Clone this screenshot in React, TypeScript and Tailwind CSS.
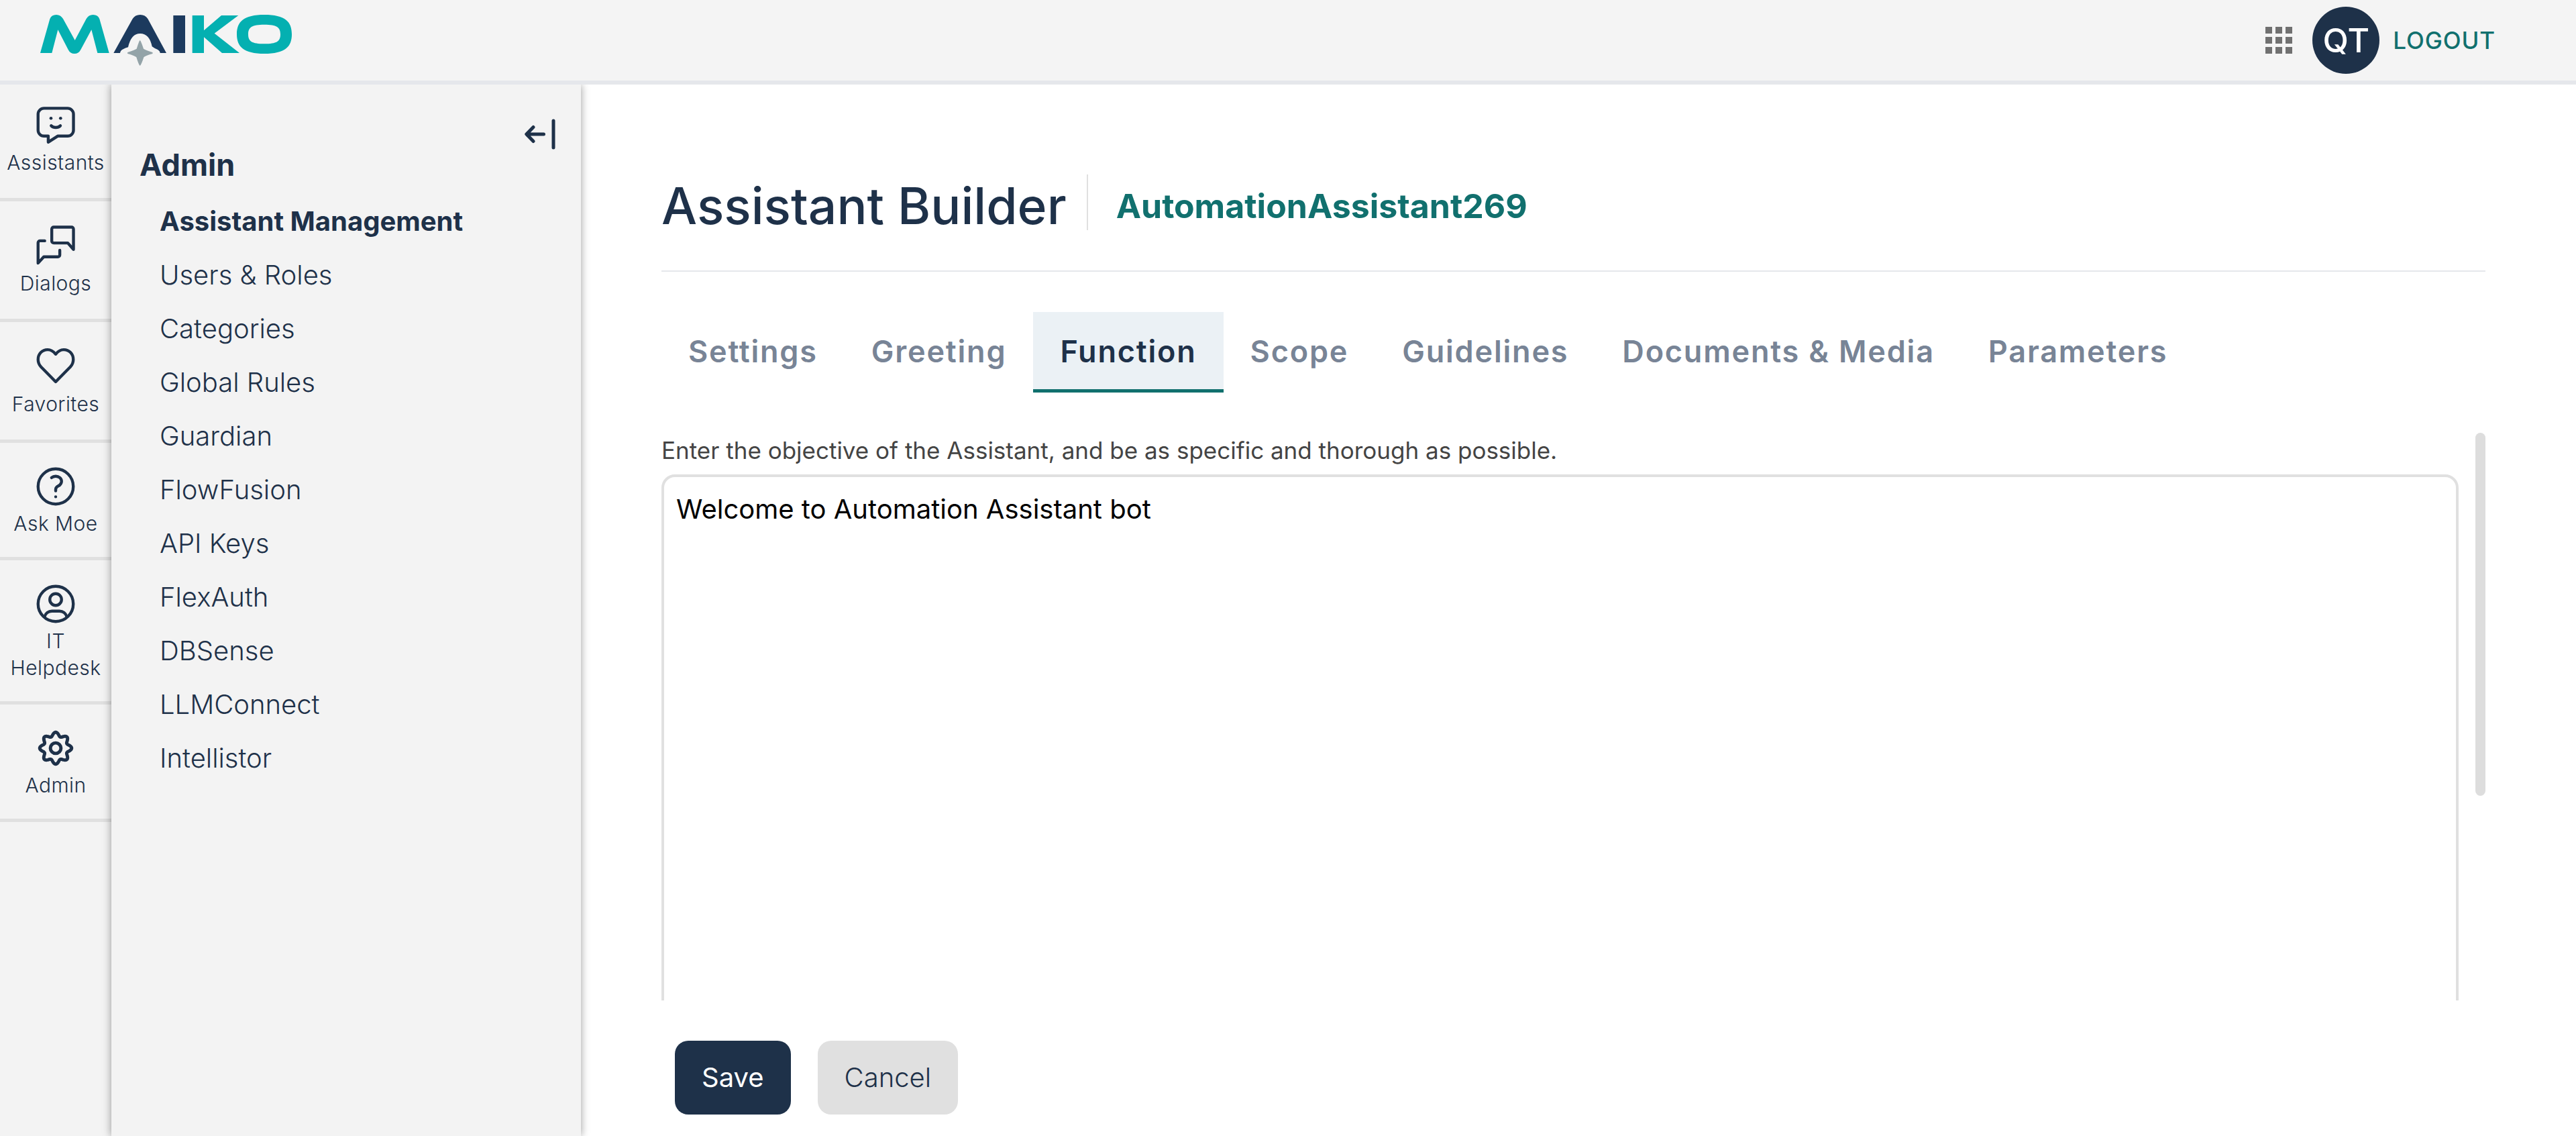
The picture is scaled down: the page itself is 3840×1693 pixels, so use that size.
import type { ReactNode } from "react";

const GEAR_PATH = (() => {
  const steps = 160;
  const points = Array.from({ length: steps }, (_, i) => {
    const angle = (i / steps) * Math.PI * 2;
    const radius = 7.15 + 1.0 * Math.cos(angle * 8);
    return `${(12 + radius * Math.sin(angle)).toFixed(2)} ${(12 - radius * Math.cos(angle)).toFixed(2)}`;
  });
  return `M${points.join("L")}Z`;
})();

function RailIcon({ children }: { children: ReactNode }) {
  return (
    <svg
      viewBox="0 0 24 24"
      className="size-[70px]"
      fill="none"
      stroke="currentColor"
      strokeWidth="1.5"
      strokeLinecap="round"
      strokeLinejoin="round"
      aria-hidden="true"
    >
      {children}
    </svg>
  );
}

const railItems = [
  {
    label: "Assistants",
    box: "pt-[24px] leading-[45px]",
    icon: (
      <>
        <path d="M6 3.9h12.1a3 3 0 0 1 3 3v8.2a3 3 0 0 1-3 3H13L8.2 21.2v-3.1H6a3 3 0 0 1-3-3V6.9a3 3 0 0 1 3-3Z" />
        <path d="M9.7 12.8c1.2 1.2 3.5 1.2 4.7 0" />
        <circle cx="9.6" cy="9" r=".8" fill="currentColor" stroke="none" />
        <circle cx="14.5" cy="9" r=".8" fill="currentColor" stroke="none" />
      </>
    ),
  },
  {
    label: "Dialogs",
    box: "pt-[30px] leading-[45px]",
    icon: (
      <>
        <path d="M11 2.9h9.1a1 1 0 0 1 1 1v10.4L18.2 11H11a1 1 0 0 1-1-1V3.9a1 1 0 0 1 1-1Z" />
        <path d="M6.4 9.9H4a1 1 0 0 0-1 1v10.4l2.9-3.2h7.2a1 1 0 0 0 1-1v-2.4" />
      </>
    ),
  },
  {
    label: "Favorites",
    box: "pt-[30px] leading-[45px]",
    icon: (
      <path d="M12 6.1C10.9 4.7 9.4 3.8 7.9 3.8 5.1 3.8 3 6 3 8.8c0 1.5.5 2.7 1.5 3.8L12 20.2l7.5-7.6c1-1.1 1.5-2.3 1.5-3.8 0-2.8-2.1-5-4.9-5-1.5 0-3 .9-4.1 2.3Z" />
    ),
  },
  {
    label: "Ask Moe",
    box: "pt-[30px] leading-[40px]",
    icon: (
      <path d="M9.879 7.519c1.171-1.025 3.071-1.025 4.242 0 1.172 1.025 1.172 2.687 0 3.712-.203.179-.43.326-.67.442-.745.361-1.45.999-1.45 1.827v.75M21 12a9 9 0 1 1-18 0 9 9 0 0 1 18 0Zm-9 5.25h.008v.008H12v-.008Z" />
    ),
  },
  {
    label: "IT Helpdesk",
    box: "pt-[30px] leading-[40px]",
    icon: (
      <>
        <circle cx="12" cy="12" r="9" />
        <circle cx="12" cy="9.75" r="3" />
        <path d="M6.3 18.6c.5-1.8 2-2.9 3.8-2.9h3.8c1.8 0 3.3 1.1 3.8 2.9" />
      </>
    ),
  },
  {
    label: "Admin",
    box: "pt-[30px] leading-[40px]",
    icon: (
      <g strokeWidth="1.7">
        <path d={GEAR_PATH} />
        <circle cx="12" cy="12" r="2.7" />
      </g>
    ),
  },
];

const adminLinks = [
  "Assistant Management",
  "Users & Roles",
  "Categories",
  "Global Rules",
  "Guardian",
  "FlowFusion",
  "API Keys",
  "FlexAuth",
  "DBSense",
  "LLMConnect",
  "Intellistor",
];

const tabs = [
  "Settings",
  "Greeting",
  "Function",
  "Scope",
  "Guidelines",
  "Documents & Media",
  "Parameters",
];

function Logo() {
  return (
    <svg viewBox="180 66 1125 231" className="h-[77px] w-[375px]" role="img" aria-label="MAIKO">
      <g fill="#04b0b1">
        <path d="M180 237 223 85Q230 66 252 66 271 66 282 84L335 180 386 84Q396 66 416 66 438 66 445 85L488 237H436L409 133 361 222Q352 240 333 240 314 240 305 222L259 133 232 237Z" />
        <path d="M860 69H912V136L990 69H1066L959 149 1071 237H993L912 166V237H860Z" />
        <path
          fillRule="evenodd"
          d="M1182 66C1275 66 1305 97 1305 153 1305 209 1275 240 1182 240 1090 240 1059 209 1059 153 1059 97 1090 66 1182 66ZM1182 110C1238 110 1254 122 1254 153 1254 185 1238 196 1182 196 1126 196 1110 185 1110 153 1110 122 1126 110 1182 110Z"
        />
      </g>
      <g fill="#1c3a5e">
        <path d="M508 237 593 84Q604 66 627 66 650 66 661 84L744 237H716Q716 228 704 221 690 216 680 208 668 150 627 150 586 150 573 211 562 214 548 221 538 226 537 237Z" />
        <path d="M775 69h53v168h-53Z" />
      </g>
      <path
        fill="#93a3a8"
        d="M626 180Q630 182 642 218 646 222 682 234 684 237 682 240 648 250 643 256 632 290 626 294 620 290 610 256 604 250 571 240 568 237 571 234 606 222 611 218 622 182 626 180Z"
      />
    </svg>
  );
}

export default function App() {
  return (
    <div className="flex h-screen flex-col bg-white font-['Inter',sans-serif] text-[#1e3149]">
      <header className="flex h-[126px] shrink-0 items-center justify-between border-b-6 border-[#e5e7eb] bg-[#f4f4f4] pr-[120px] pl-[60px]">
        <a href="#home">
          <Logo />
        </a>
        <div className="flex items-center">
          <button type="button" aria-label="Apps" className="mr-[30px]">
            <svg viewBox="0 0 40 40" className="size-[40px]" fill="#707070" aria-hidden="true">
              {[0, 15, 30].map((y) =>
                [0, 15, 30].map((x) => <rect key={`${x}-${y}`} x={x} y={y} width="10" height="10" />),
              )}
            </svg>
          </button>
          <span className="mr-[20px] flex size-[100px] items-center justify-center rounded-full text-[50px] font-medium text-white bg-[#1e3149]">
            QT
          </span>
          <button type="button" className="text-[35px] font-medium tracking-wide text-[#11706e]">
            LOGOUT
          </button>
        </div>
      </header>

      <div className="flex min-h-0 flex-1 overflow-hidden">
        <nav aria-label="Main" className="w-[166px] shrink-0 bg-[#f3f3f3]">
          {railItems.map((item) => (
            <a
              key={item.label}
              href="#rail"
              className={`flex flex-col items-center border-b-5 border-[#e0e0e0] pb-[30px] text-center text-[30px] font-light tracking-[0.015em] ${item.box}`}
            >
              <RailIcon>{item.icon}</RailIcon>
              {item.label}
            </a>
          ))}
        </nav>

        <aside className="z-10 w-[700px] shrink-0 bg-[#f3f3f3] pt-[51px] shadow-[0_0_12px_rgba(0,0,0,0.4)]">
          <div className="flex justify-end pr-[38px]">
            <button type="button" aria-label="Collapse menu">
              <svg
                viewBox="0 0 46 46"
                className="size-[46px]"
                fill="none"
                stroke="currentColor"
                strokeWidth="5"
                strokeLinecap="round"
                strokeLinejoin="round"
                aria-hidden="true"
              >
                <path d="M28.5 23H3M13 12.5 2.8 23 13 33.5M43 3v40" />
              </svg>
            </button>
          </div>
          <h2 className="pl-[42px] text-[45px] leading-[45px] font-bold">Admin</h2>
          <ul className="mt-8 flex flex-col gap-5 pl-[72px] text-[40px] leading-[60px]">
            {adminLinks.map((label, i) => (
              <li key={label} className={i === 0 ? "font-bold" : "font-light"}>
                <a href="#admin">{label}</a>
              </li>
            ))}
          </ul>
        </aside>

        <main className="flex min-w-0 flex-1 flex-col pt-[134px] pr-[135px] pb-[32px] pl-[120px]">
          <div className="flex items-start border-b-2 border-[#e5e7eb] pb-[49px]">
            <h1 className="text-[75px] leading-[94px] font-medium">Assistant Builder</h1>
            <div className="ml-[30px] h-[83px] w-[2px] bg-[#e0e0e0]" />
            <p className="ml-[42px] text-[50px] leading-[94px] font-bold text-[#11706e]">
              AutomationAssistant269
            </p>
          </div>

          <div role="tablist" className="mt-[60px] flex">
            {tabs.map((tab) => (
              <button
                key={tab}
                type="button"
                role="tab"
                aria-selected={tab === "Function"}
                className={`border-b-5 px-[40px] pt-[29px] pb-[26px] text-[45px] leading-[60px] font-semibold tracking-[0.04em] ${
                  tab === "Function" ? "border-[#11706e] bg-[#ebf1f5]" : "border-transparent text-[#788496]"
                }`}
              >
                {tab}
              </button>
            ))}
          </div>

          <div className="mt-[60px] flex min-h-0 flex-1 gap-[25px]">
            <div className="min-w-0 flex-1 overflow-hidden">
              <label htmlFor="objective" className="block text-[35px] leading-[52px] text-[#444444]">
                Enter the objective of the Assistant, and be as specific and thorough as possible.
              </label>
              <textarea
                id="objective"
                defaultValue="Welcome to Automation Assistant bot"
                className="mt-[10px] block h-[1250px] w-full resize-none rounded-[20px] border-4 border-[#e0e0e0] px-[18px] py-[18px] text-[40px] leading-[60px] text-black"
              />
            </div>
            <div className="h-[64%] w-[15px] rounded-full bg-[#dddddd]" />
          </div>

          <div className="mt-[60px] flex gap-[40px] pl-[20px] text-[40px] leading-[60px]">
            <button type="button" className="rounded-[20px] bg-[#1e3149] px-[40px] py-[25px] text-white">
              Save
            </button>
            <button type="button" className="rounded-[20px] bg-[#e0e0e0] px-[40px] py-[25px] font-light">
              Cancel
            </button>
          </div>
        </main>
      </div>
    </div>
  );
}
